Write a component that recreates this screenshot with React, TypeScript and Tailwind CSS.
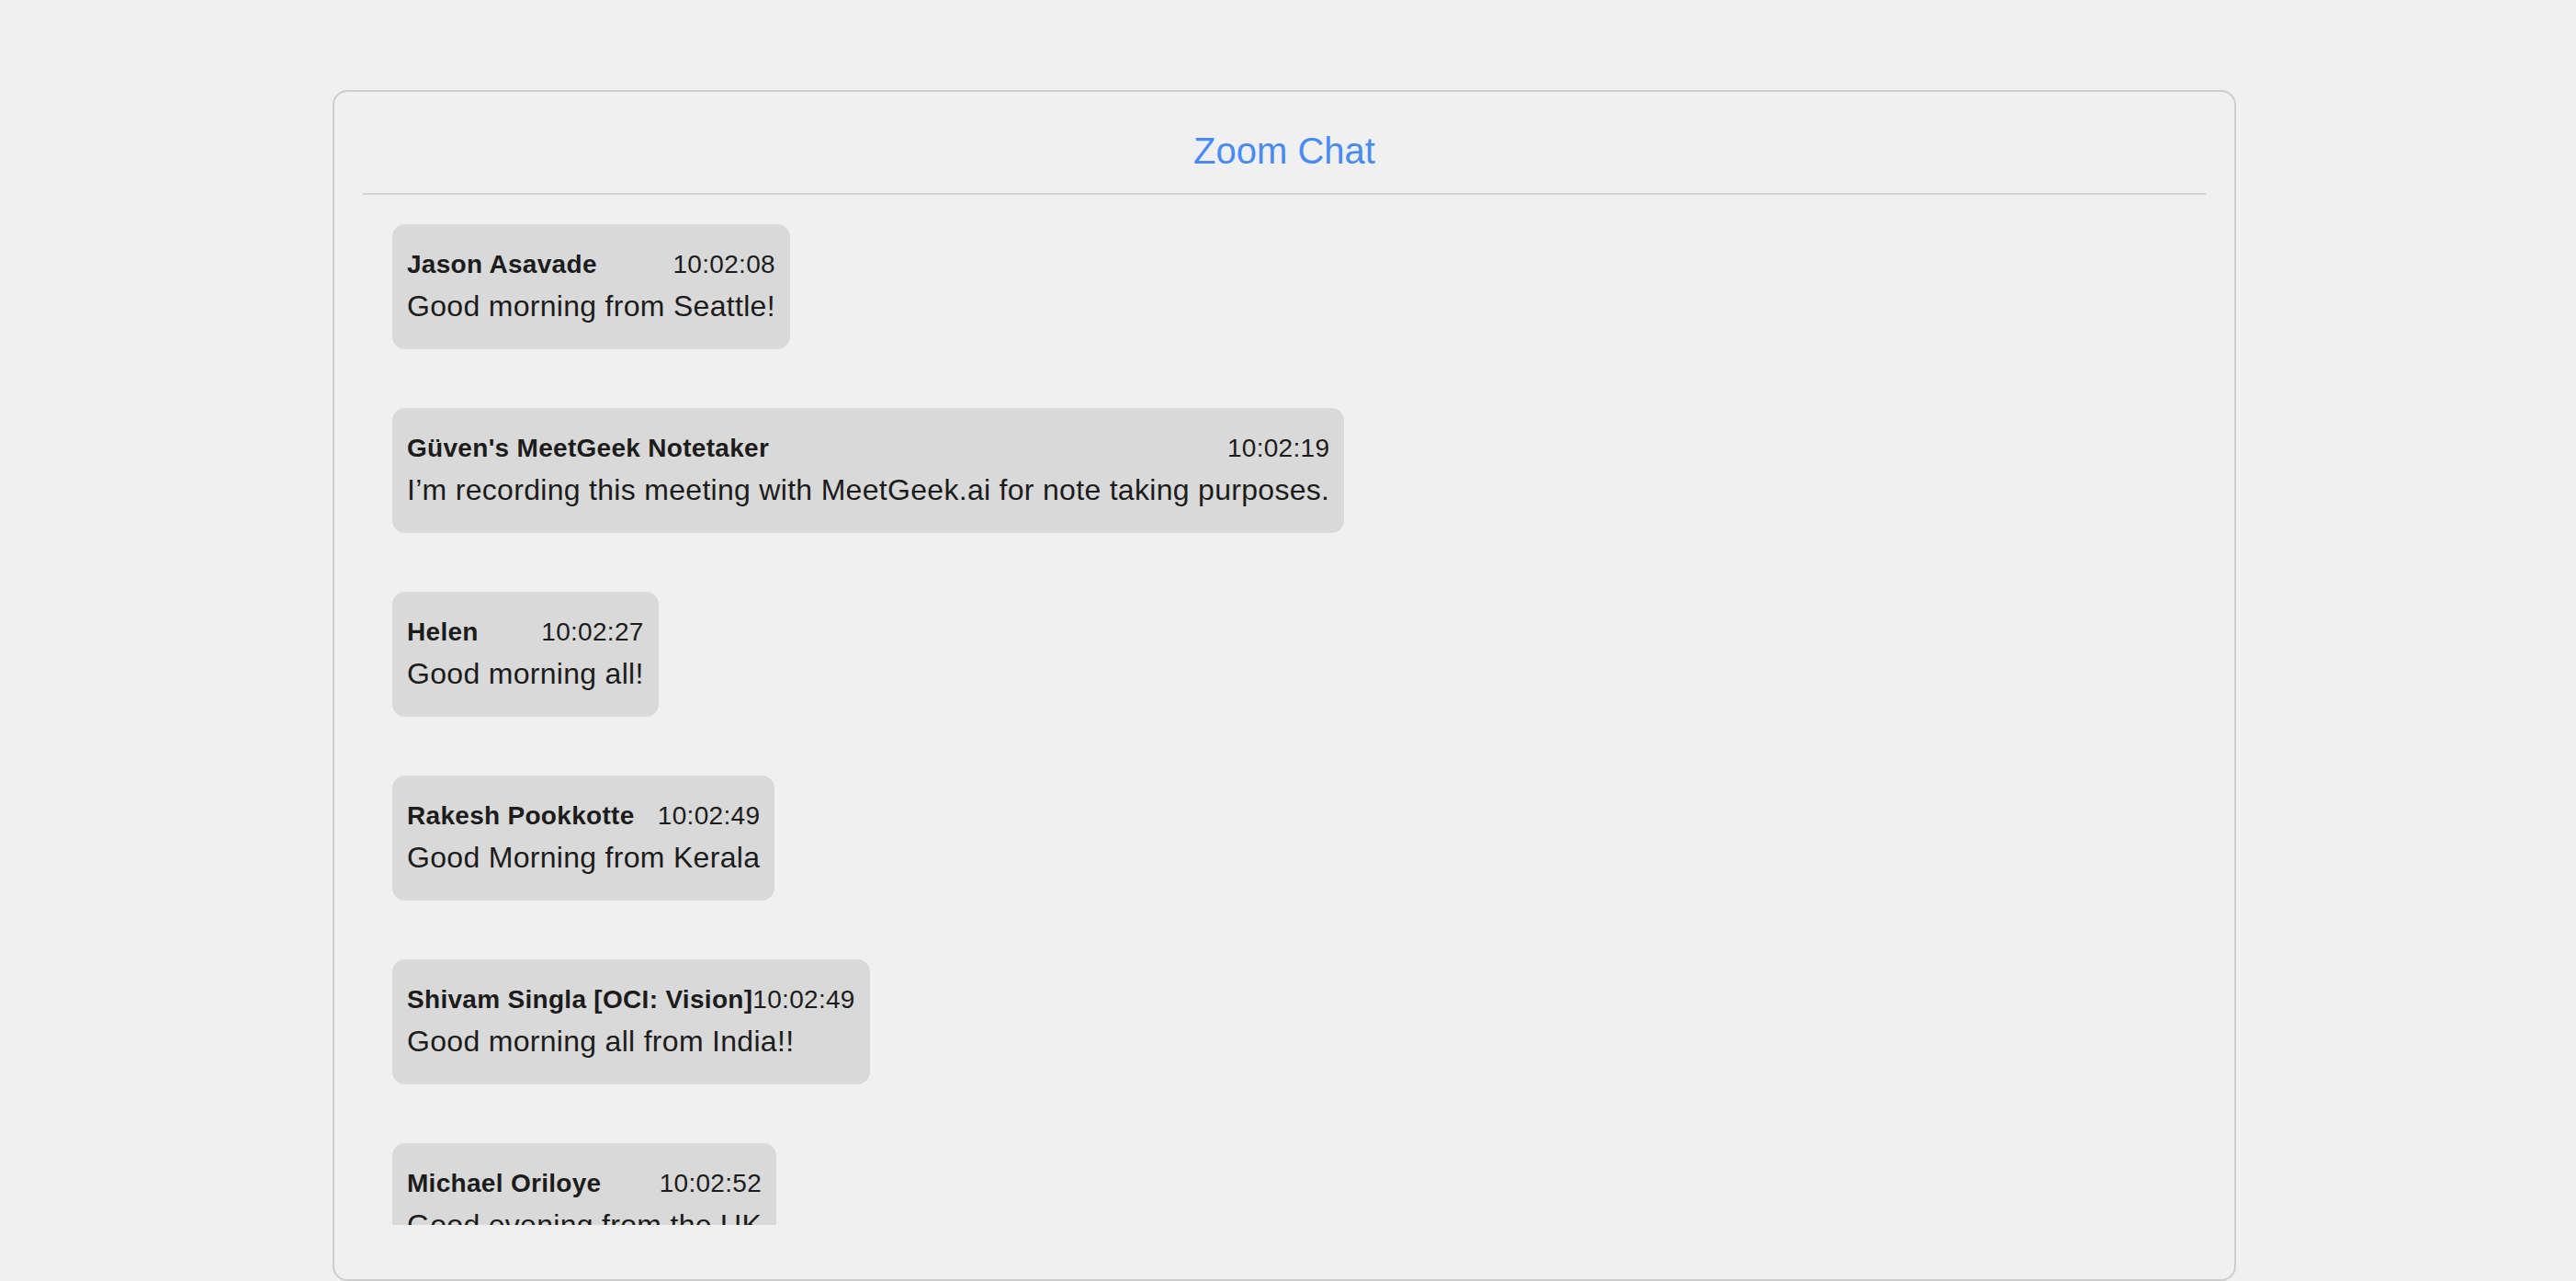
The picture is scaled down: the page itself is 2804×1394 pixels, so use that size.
import React from "react";

type Msg = { name: string; time: string; text: string };

const messages: Msg[] = [
  { name: "Jason Asavade", time: "10:02:08", text: "Good morning from Seattle!" },
  {
    name: "Güven's MeetGeek Notetaker",
    time: "10:02:19",
    text: "I’m recording this meeting with MeetGeek.ai for note taking purposes.",
  },
  { name: "Helen", time: "10:02:27", text: "Good morning all!" },
  { name: "Rakesh Pookkotte", time: "10:02:49", text: "Good Morning from Kerala" },
  { name: "Shivam Singla [OCI: Vision]", time: "10:02:49", text: "Good morning all from India!!" },
  { name: "Michael Oriloye", time: "10:02:52", text: "Good evening from the UK" },
];

function Bubble({ m }: { m: Msg }) {
  return (
    <div className="shrink-0 rounded-[14px] bg-[#d9d9d9] px-[16px] pt-[23px] pb-[23px] text-[#1c1c1c]">
      <div className="flex justify-between whitespace-nowrap text-[28px] leading-[42px] tracking-[0.3px]">
        <span className="font-bold">{m.name}</span>
        <span>{m.time}</span>
      </div>
      <div className="whitespace-nowrap text-[32px] leading-[48px] tracking-[0.3px]">{m.text}</div>
    </div>
  );
}

export default function App() {
  return (
    <div
      className="min-h-[1394px] bg-[#f0f0f0] pt-[98px] pl-[362px]"
      style={{ fontFamily: '"Liberation Sans", Arial, Helvetica, sans-serif' }}
    >
      <div className="flex h-[1296px] w-[2072px] flex-col rounded-[16px] border-2 border-[#cdcdcd] bg-[#f0f0f0] px-[31px] pt-[32px]">
        <h1 className="text-center text-[40px] leading-[64px] text-[#468bf6]">Zoom Chat</h1>
        <div className="mt-[14px] h-[2px] bg-[#d3d3d3]" />
        <div className="flex h-[1121px] flex-col items-start gap-[64px] overflow-hidden pt-[32px] pl-[32px]">
          {messages.map((m, i) => (
            <Bubble key={i} m={m} />
          ))}
        </div>
      </div>
    </div>
  );
}
